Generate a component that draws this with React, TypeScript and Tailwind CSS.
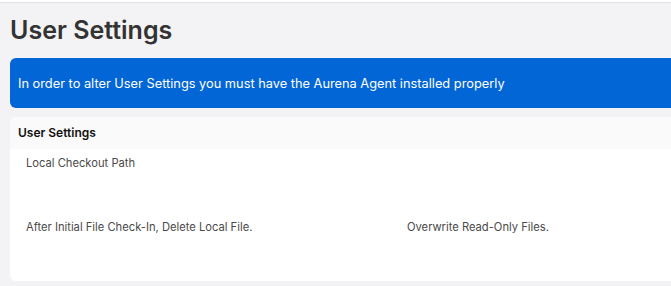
import React from 'react';

const rows = [
  [{ label: 'Local Checkout Path' }],
  [{ label: 'After Initial File Check-In, Delete Local File.' }, { label: 'Overwrite Read-Only Files.' }],
];

export default function App() {
  return (
    <div className="h-[286px] w-[671px] overflow-hidden bg-[#f3f2f5] font-['Inter','Liberation_Sans',sans-serif]">
      <div className="h-[3px] border-b border-[#e2e1e4] bg-white" />
      <div className="w-[804px] pl-[10px] pt-[12px]">
        <h1 className="text-[25px] leading-[30px] font-semibold text-[#333333]">User Settings</h1>

        <div className="mt-[13px] flex h-[50px] items-center rounded-l-[6px] bg-[#0366d6] pl-[8px] pt-[1px] text-[12.8px] text-white">
          In order to alter User Settings you must have the Aurena Agent installed properly
        </div>

        <section className="mt-[9px] overflow-hidden rounded-l-[6px] bg-white">
          <header className="flex h-[32px] items-center bg-[#fafafa] pl-[8px] text-[12px] font-semibold text-[#111111]">
            User Settings
          </header>
          <div className="px-[16px] pt-[6px]">
            {rows.map((row, i) => (
              <div key={i} className="grid h-[64px] grid-cols-2 last:h-[62px]">
                {row.map((field) => (
                  <label key={field.label} className="text-[11.2px] leading-[16px] text-[#4a4a4a]">
                    {field.label}
                  </label>
                ))}
              </div>
            ))}
          </div>
        </section>
      </div>
    </div>
  );
}
